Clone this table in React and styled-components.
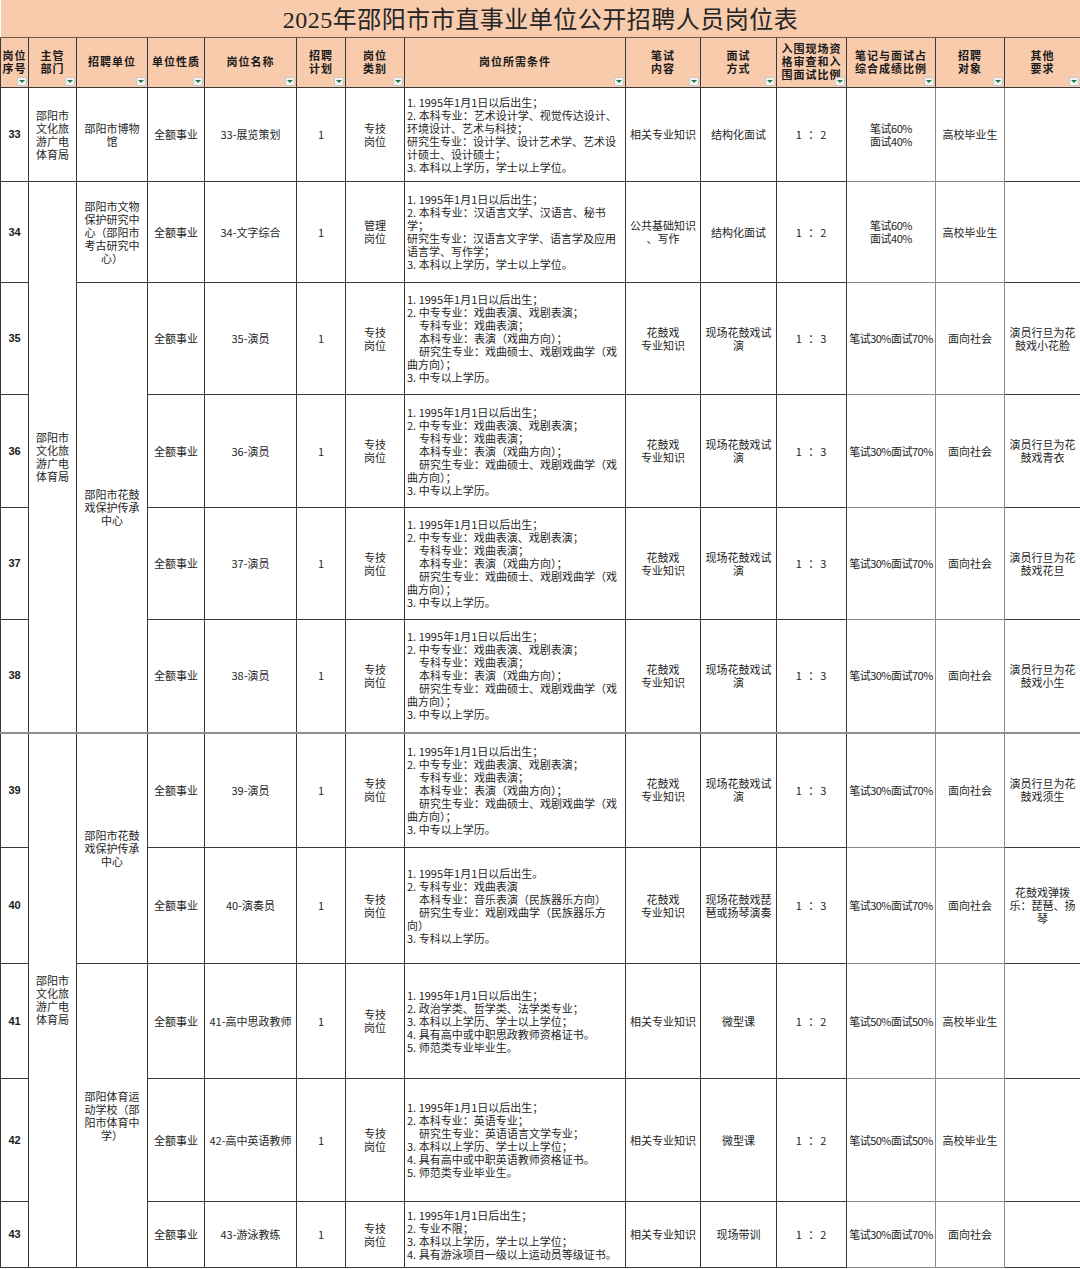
import React from 'react';
import styled, { createGlobalStyle } from 'styled-components';

const GlobalStyle = createGlobalStyle`
  html, body {
    margin: 0;
    padding: 0;
    background: #fff;
  }
  body {
    font-family: "Noto Sans CJK SC", "Liberation Sans", sans-serif;
    color: #1f1f1f;
  }
`;

const Sheet = styled.table`
  width: 1080px;
  table-layout: fixed;
  border-collapse: collapse;
  font-size: 11px;
  line-height: 13px;
`;

const TitleCell = styled.td`
  height: 34px;
  background: #f8cbad;
  text-align: center;
  vertical-align: middle;
  font-family: "Liberation Serif", "Noto Sans CJK SC", serif;
  font-size: 24px;
  font-weight: 400;
  color: #262626;
  letter-spacing: 0.5px;
  border-bottom: 1px solid #6b5a50;
  padding: 3px 0 0;
`;

const HeadRow = styled.tr`
  height: 50px;
`;

const HeadCell = styled.th`
  position: relative;
  background: #f8cbad;
  border: 1px solid #3a3a3a;
  font-weight: 700;
  font-size: 11px;
  line-height: 13px;
  letter-spacing: 1px;
  color: #1a1a1a;
  white-space: pre;
  text-align: center;
  vertical-align: middle;
  padding: 0 0 2px;
`;

const FilterBtn = styled.span`
  position: absolute;
  right: 1px;
  bottom: 1px;
  width: 10px;
  height: 9px;
  background: #f3f3f3;
  border: 1px solid #c9c9c9;
  box-sizing: border-box;
  display: flex;
  align-items: center;
  justify-content: center;
  &::after {
    content: '';
    border-left: 3px solid transparent;
    border-right: 3px solid transparent;
    border-top: 3px solid #1f7a4a;
  }
`;

const Row = styled.tr`
  height: ${(p) => p.$h}px;
`;

const Cell = styled.td`
  border: 1px solid ${(p) => (p.$soft ? '#8a8a8a' : '#3a3a3a')};
  ${(p) => p.$topSoft && 'border-top: 2px solid #8f8f8f;'}
  text-align: center;
  vertical-align: middle;
  white-space: pre;
  padding: 0 1px;
  color: #262626;
  overflow: hidden;
`;

const NoCell = styled(Cell)`
  font-weight: 700;
  font-family: "Liberation Sans", "Noto Sans CJK SC", sans-serif;
  font-size: 11px;
  color: #1a1a1a;
`;

const RatioCell = styled(Cell)`
  word-spacing: 2px;
  letter-spacing: 1px;
`;

const WeightCell = styled(Cell)`
  letter-spacing: -0.5px;
`;

const CondCell = styled(Cell)`
  text-align: left;
  padding: 0 2px;
`;

const CondLine = styled.div`
  padding-left: ${(p) => (p.$indent ? 12 : 0)}px;
  white-space: pre;
`;

const widths = [28, 48, 71, 57, 92, 49, 59, 221, 75, 76, 70, 89, 69, 76];

const headers = [
  '岗位\n序号',
  '主管\n部门',
  '招聘单位',
  '单位性质',
  '岗位名称',
  '招聘\n计划',
  '岗位\n类别',
  '岗位所需条件',
  '笔试\n内容',
  '面试\n方式',
  '入围现场资\n格审查和入\n围面试比例',
  '笔记与面试占\n综合成绩比例',
  '招聘\n对象',
  '其他\n要求',
];

const dept = '邵阳市\n文化旅\n游广电\n体育局';
const opera = '邵阳市花鼓\n戏保护传承\n中心';

const actorCond = [
  '1. 1995年1月1日以后出生；',
  '2. 中专专业：戏曲表演、戏剧表演；',
  '>专科专业：戏曲表演；',
  '>本科专业：表演（戏曲方向）；',
  '>研究生专业：戏曲硕士、戏剧戏曲学（戏',
  '曲方向）；',
  '3. 中专以上学历。',
];

const actor = (no, h, other, extra = {}) => ({
  no,
  h,
  nature: '全额事业',
  name: `${no}-演员`,
  plan: '1',
  type: '专技\n岗位',
  cond: actorCond,
  exam: '花鼓戏\n专业知识',
  interview: '现场花鼓戏试\n演',
  ratio: '1 ：3',
  weight: '笔试30%面试70%',
  target: '面向社会',
  other,
  ...extra,
});

const rows = [
  {
    no: 33,
    h: 94,
    dept: { text: dept, span: 1 },
    unit: { text: '邵阳市博物\n馆', span: 1 },
    nature: '全额事业',
    name: '33-展览策划',
    plan: '1',
    type: '专技\n岗位',
    cond: [
      '1. 1995年1月1日以后出生；',
      '2. 本科专业：艺术设计学、视觉传达设计、',
      '环境设计、艺术与科技；',
      '研究生专业：设计学、设计艺术学、艺术设',
      '计硕士、设计硕士；',
      '3. 本科以上学历，学士以上学位。',
    ],
    exam: '相关专业知识',
    interview: '结构化面试',
    ratio: '1 ：2',
    weight: '笔试60%\n面试40%',
    target: '高校毕业生',
    other: '',
  },
  {
    no: 34,
    h: 101,
    dept: { text: dept, span: 5 },
    unit: { text: '邵阳市文物\n保护研究中\n心（邵阳市\n考古研究中\n心）', span: 1 },
    nature: '全额事业',
    name: '34-文字综合',
    plan: '1',
    type: '管理\n岗位',
    cond: [
      '1. 1995年1月1日以后出生；',
      '2. 本科专业：汉语言文学、汉语言、秘书',
      '学；',
      '研究生专业：汉语言文字学、语言学及应用',
      '语言学、写作学；',
      '3. 本科以上学历，学士以上学位。',
    ],
    exam: '公共基础知识\n、写作',
    interview: '结构化面试',
    ratio: '1 ：2',
    weight: '笔试60%\n面试40%',
    target: '高校毕业生',
    other: '',
  },
  actor(35, 112, '演员行旦为花\n鼓戏小花脸', { unit: { text: opera, span: 4 } }),
  actor(36, 113, '演员行旦为花\n鼓戏青衣'),
  actor(37, 112, '演员行旦为花\n鼓戏花旦'),
  actor(38, 113, '演员行旦为花\n鼓戏小生'),
  actor(39, 115, '演员行旦为花\n鼓戏须生', {
    dept: { text: dept, span: 5 },
    unit: { text: opera, span: 2 },
    soft: true,
  }),
  {
    no: 40,
    h: 116,
    nature: '全额事业',
    name: '40-演奏员',
    plan: '1',
    type: '专技\n岗位',
    cond: [
      '1. 1995年1月1日以后出生。',
      '2. 专科专业：戏曲表演',
      '>本科专业：音乐表演（民族器乐方向）',
      '>研究生专业：戏剧戏曲学（民族器乐方',
      '向）',
      '3. 专科以上学历。',
    ],
    exam: '花鼓戏\n专业知识',
    interview: '现场花鼓戏琵\n琶或扬琴演奏',
    ratio: '1 ：3',
    weight: '笔试30%面试70%',
    target: '面向社会',
    other: '花鼓戏弹拨\n乐：琵琶、扬\n琴',
  },
  {
    no: 41,
    h: 115,
    unit: { text: '邵阳体育运\n动学校（邵\n阳市体育中\n学）', span: 3 },
    nature: '全额事业',
    name: '41-高中思政教师',
    plan: '1',
    type: '专技\n岗位',
    cond: [
      '1. 1995年1月1日以后出生；',
      '2. 政治学类、哲学类、法学类专业；',
      '3. 本科以上学历、学士以上学位；',
      '4. 具有高中或中职思政教师资格证书。',
      '5. 师范类专业毕业生。',
    ],
    exam: '相关专业知识',
    interview: '微型课',
    ratio: '1 ：2',
    weight: '笔试50%面试50%',
    target: '高校毕业生',
    other: '',
  },
  {
    no: 42,
    h: 123,
    nature: '全额事业',
    name: '42-高中英语教师',
    plan: '1',
    type: '专技\n岗位',
    cond: [
      '1. 1995年1月1日以后出生；',
      '2. 本科专业：英语专业；',
      '>研究生专业：英语语言文学专业；',
      '3. 本科以上学历、学士以上学位；',
      '4. 具有高中或中职英语教师资格证书。',
      '5. 师范类专业毕业生。',
    ],
    exam: '相关专业知识',
    interview: '微型课',
    ratio: '1 ：2',
    weight: '笔试50%面试50%',
    target: '高校毕业生',
    other: '',
  },
  {
    no: 43,
    h: 66,
    nature: '全额事业',
    name: '43-游泳教练',
    plan: '1',
    type: '专技\n岗位',
    cond: [
      '1. 1995年1月1日后出生；',
      '2. 专业不限；',
      '3. 本科以上学历，学士以上学位；',
      '4. 具有游泳项目一级以上运动员等级证书。',
    ],
    exam: '相关专业知识',
    interview: '现场带训',
    ratio: '1 ：2',
    weight: '笔试30%面试70%',
    target: '面向社会',
    other: '',
  },
];

function Condition({ lines }) {
  return lines.map((l, i) =>
    l.startsWith('>') ? (
      <CondLine key={i} $indent>
        {l.slice(1)}
      </CondLine>
    ) : (
      <CondLine key={i}>{l}</CondLine>
    )
  );
}

export default function App() {
  return (
    <>
      <GlobalStyle />
      <Sheet>
        <colgroup>
          {widths.map((w, i) => (
            <col key={i} style={{ width: w }} />
          ))}
        </colgroup>
        <thead>
          <tr>
            <TitleCell colSpan={14}>2025年邵阳市市直事业单位公开招聘人员岗位表</TitleCell>
          </tr>
          <HeadRow>
            {headers.map((h, i) => (
              <HeadCell key={i}>
                {h}
                <FilterBtn />
              </HeadCell>
            ))}
          </HeadRow>
        </thead>
        <tbody>
          {rows.map((r) => (
            <Row key={r.no} $h={r.h}>
              <NoCell $topSoft={r.soft}>{r.no}</NoCell>
              {r.dept && (
                <Cell rowSpan={r.dept.span} $topSoft={r.soft}>
                  {r.dept.text}
                </Cell>
              )}
              {r.unit && (
                <Cell rowSpan={r.unit.span} $topSoft={r.soft}>
                  {r.unit.text}
                </Cell>
              )}
              <Cell $topSoft={r.soft}>{r.nature}</Cell>
              <Cell $topSoft={r.soft}>{r.name}</Cell>
              <Cell $topSoft={r.soft}>{r.plan}</Cell>
              <Cell $topSoft={r.soft}>{r.type}</Cell>
              <CondCell $topSoft={r.soft}>
                <Condition lines={r.cond} />
              </CondCell>
              <Cell $topSoft={r.soft}>{r.exam}</Cell>
              <Cell $topSoft={r.soft}>{r.interview}</Cell>
              <RatioCell $topSoft={r.soft}>{r.ratio}</RatioCell>
              <WeightCell $soft $topSoft={r.soft}>
                {r.weight}
              </WeightCell>
              <Cell $soft $topSoft={r.soft}>
                {r.target}
              </Cell>
              <Cell $topSoft={r.soft}>{r.other}</Cell>
            </Row>
          ))}
        </tbody>
      </Sheet>
    </>
  );
}
